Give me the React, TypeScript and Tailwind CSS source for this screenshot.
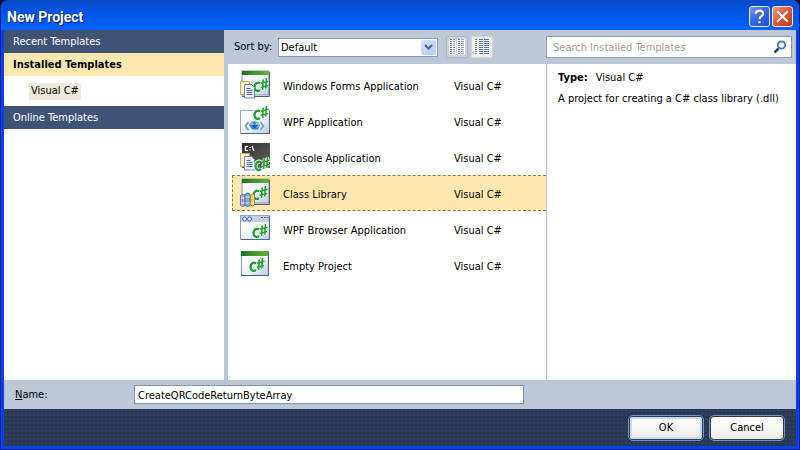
import { useState } from "react";
import type { ReactNode } from "react";

function Glyph({ x = 0, y = 0 }: { x?: number; y?: number }) {
  const c = "M7 6.500C4.500 4.500 1.500 6.500 1.500 10s3 5 5.500 3";
  const sharp = "M10.200 2.500 9.600 13M13.400 1l-.6 10.500M8 6.200l7.600-2M7.600 10.400l7.600-2";
  return (
    <g transform={`translate(${x} ${y})`} fill="none">
      <path d={c} stroke="#fff" strokeWidth="4" />
      <path d={sharp} stroke="#fff" strokeWidth="3" />
      <path d={c} stroke="#1fa12b" strokeWidth="2.400" />
      <path d={sharp} stroke="#1fa12b" strokeWidth="1.600" />
    </g>
  );
}

function GreenWindow() {
  return (
    <>
      <rect x="2" y="1" width="27" height="24" fill="url(#pane)" stroke="#8494a8" />
      <path d="M29.500 2v24.500H2" fill="none" stroke="#4d5f7d" />
      <rect x="2" y="1" width="27" height="4" fill="url(#green)" />
    </>
  );
}

function Pages() {
  return (
    <>
      <path d="M.5 11.500h9v13h-9z" fill="#fff3bd" stroke="#c4ae6b" />
      <path d="M4.500 14.500h7l3 3v10.500h-10z" fill="#f5f9ff" stroke="#7087ad" />
      <path d="M6.500 18.500h4M6.500 20.500h6M6.500 22.500h6M6.500 24.500h6" stroke="#3569b8" />
    </>
  );
}

type Kind = "forms" | "wpf" | "console" | "library" | "browser" | "empty";

function TemplateIcon({ kind }: { kind: Kind }) {
  return (
    <svg viewBox="0 0 32 30" className="h-[30px] w-8 shrink-0" aria-hidden="true">
      <defs>
        <linearGradient id="pane" x1="0" y1="0" x2="1" y2="1">
          <stop offset="0" stopColor="#fff" />
          <stop offset=".5" stopColor="#f3f7fb" />
          <stop offset="1" stopColor="#b9cce6" />
        </linearGradient>
        <linearGradient id="green">
          <stop offset="0" stopColor="#1f7427" />
          <stop offset="1" stopColor="#67b536" />
        </linearGradient>
        <linearGradient id="dark" x1="0" y1="0" x2="1" y2="1">
          <stop offset="0" stopColor="#2c2c2c" />
          <stop offset="1" stopColor="#686868" />
        </linearGradient>
      </defs>
      {kind === "forms" && (
        <>
          <GreenWindow />
          <Glyph x={13} y={7} />
          <Pages />
        </>
      )}
      {kind === "wpf" && (
        <>
          <rect x=".5" y="4.500" width="29" height="23" fill="url(#pane)" stroke="#a4acb8" />
          <path d="M29.500 5v22.500H1" fill="none" stroke="#526788" />
          <path d="m8.500 16-3 4 3 4M20.500 16l3 4-3 4" fill="none" stroke="#6e96b4" strokeWidth="1.500" />
          <path d="m9 19 3-3.500h5l3 3.500-2 4.500h-6z" fill="#3b86d4" />
          <path d="m9 19 3-3.500 2 3.500zM15 19l2-3.500 3 3.500-3 3z" fill="#86bdf0" />
          <path d="m12 19 3 4 3-4z" fill="#1b58ae" />
          <Glyph x={13} y={-1} />
        </>
      )}
      {kind === "console" && (
        <>
          <rect x="2" y="1" width="28" height="25" fill="url(#dark)" />
          <path d="M8 4.500H5.500v4H8M10 5v1M10 7.500v1M12 4l2 5" fill="none" stroke="#fff" strokeWidth="1.200" />
          <Pages />
          <Glyph x={14} y={14} />
        </>
      )}
      {kind === "library" && (
        <>
          <GreenWindow />
          <Glyph x={12} y={7} />
          <g strokeWidth=".8">
            <path d="M.5 17.500q2-3 4.500-.5v10.500q-2.500 2-4.500 0z" fill="#aaa4dc" stroke="#686596" />
            <path d="M5 16.500q2.500-3 5-.5v11.500q-2.500 2-5 0z" fill="#7faad4" stroke="#43658b" />
            <path d="M10.500 17.500q2-3 4-.5v10q-2 2-4 0z" fill="#efd15f" stroke="#9d7b2b" />
            <path d="M1 20h3.500M1 25h3.500M5.500 19H10M5.500 25H10M11 20h3M11 25h3" stroke="#fff" />
          </g>
        </>
      )}
      {kind === "browser" && (
        <>
          <rect x=".5" y="1.500" width="29" height="24" fill="url(#pane)" stroke="#97a2b3" />
          <path d="M29.500 2v23.500H1" fill="none" stroke="#526788" />
          <path d="M1 2h28v6H1z" fill="#c5cfdf" />
          <circle cx="4.500" cy="5" r="2" fill="#dce9ff" stroke="#4a68bb" />
          <circle cx="9.500" cy="5" r="2" fill="#dce9ff" stroke="#4a68bb" />
          <path d="M21 3.500h2M24 3.500h2M27 3.500h1.500" stroke="#596b87" />
          <Glyph x={12} y={9} />
        </>
      )}
      {kind === "empty" && (
        <>
          <rect x="1.500" y="1.500" width="27" height="24" fill="url(#pane)" stroke="#8494a8" />
          <path d="M28.500 2v23.500H1" fill="none" stroke="#4d5f7d" />
          <rect x="1" y="1" width="27" height="5" fill="url(#green)" />
          <Glyph x={9} y={7} />
        </>
      )}
    </svg>
  );
}

function ViewIcon({ detailed }: { detailed: boolean }) {
  const dots = ["#5e78b8", "#c45a5a", "#4c66a8", "#5a9a55", "#b27a3c", "#4c66a8", "#8a5aa0", "#5a9a55"];
  return (
    <svg viewBox="0 0 16 16" className="size-4" aria-hidden="true">
      <path d={detailed ? "M0 0h16v16H0z" : "M0 0h7v16H0zM8 0h8v16H8z"} fill="#fbfbfd" />
      {dots.map((dot, i) => (
        <g key={i} transform={`translate(0 ${i * 2})`}>
          <path d="M1 .5h2" stroke={dot} />
          {detailed ? (
            <path d="M5 .5h4M10 .5h5" stroke="#4f70cc" />
          ) : (
            <>
              <path d="M4 .5h2M12 .5h3" stroke="#8b9bd0" />
              <path d="M9 .5h2" stroke={dots[7 - i]} />
            </>
          )}
        </g>
      ))}
    </svg>
  );
}

const templates: { kind: Kind; name: string }[] = [
  { kind: "forms", name: "Windows Forms Application" },
  { kind: "wpf", name: "WPF Application" },
  { kind: "console", name: "Console Application" },
  { kind: "library", name: "Class Library" },
  { kind: "browser", name: "WPF Browser Application" },
  { kind: "empty", name: "Empty Project" },
];

function CaptionButton({ label, className, children }: { label: string; className: string; children: ReactNode }) {
  return (
    <button
      type="button"
      aria-label={label}
      className={`flex size-[21px] items-center justify-center rounded-[3px] border border-[#e4ebfb] bg-linear-to-br ${className}`}
    >
      {children}
    </button>
  );
}

function DialogButton({ primary, children }: { primary?: boolean; children: ReactNode }) {
  return (
    <button
      type="button"
      className={`h-[22px] w-[72px] rounded-[3px] bg-linear-to-b from-white to-[#ecebe5] outline outline-offset-1 outline-[#7896bd] ${
        primary ? "shadow-[inset_0_0_0_2px_#c6d9f7]" : ""
      }`}
    >
      {children}
    </button>
  );
}

export default function App() {
  const [selected, setSelected] = useState("Class Library");
  return (
    <div className="flex min-h-screen flex-col bg-[#10103c] font-['DejaVu_Sans_Condensed','Liberation_Sans',sans-serif] text-[11px] leading-4 text-black">
      <main className="flex flex-1 flex-col rounded-t-lg border-x border-b border-[#001c9c] bg-[#0544e4] px-[3px] pb-[3px]">
        <header className="-mx-[3px] flex h-[30px] shrink-0 items-center justify-between rounded-t-[7px] bg-linear-to-b from-[#0a4bc8] via-[#0054e3] via-40% to-[#0562fb] px-[6px]">
          <h1 className="pt-1 font-['Roboto','Open_Sans',sans-serif] text-sm font-bold text-white [text-shadow:1px_1px_1px_#0a1883]">
            New Project
          </h1>
          <div className="flex gap-[2px] pt-[3px]">
            <CaptionButton label="Help" className="from-[#7797f3] via-[#3564e5] to-[#1d4bd8]">
              <svg viewBox="0 0 14 14" className="size-[15px]" fill="none" stroke="#fff" strokeWidth="2" aria-hidden="true">
                <path d="M3.500 4.500C3.500.5 10.500.5 10.500 4.200 10.500 6.800 7 6.500 7 9.500M7 11.200v2" />
              </svg>
            </CaptionButton>
            <CaptionButton label="Close" className="from-[#f0967c] via-[#e05430] to-[#c43a12]">
              <svg viewBox="0 0 14 14" className="size-[15px]" stroke="#fff" strokeWidth="2" aria-hidden="true">
                <path d="m2 2 10 10M12 2 2 12" />
              </svg>
            </CaptionButton>
          </div>
        </header>

        <div className="flex min-h-0 flex-1 bg-[#bcc7d8]">
          <nav aria-label="Template categories" className="flex w-[220px] shrink-0 flex-col bg-white">
            <button type="button" className="h-[23px] bg-[#3f5377] px-[9px] text-left text-white">
              Recent Templates
            </button>
            <button type="button" className="h-[23px] bg-[#ffe8b0] px-[9px] text-left font-bold">
              Installed Templates
            </button>
            <div className="flex h-[30px] items-center pl-[25px]">
              <button type="button" className="h-[17px] bg-[#ece9d8] px-[2px]">
                Visual C#
              </button>
            </div>
            <button type="button" className="h-[23px] bg-[#3f5377] px-[9px] text-left text-white">
              Online Templates
            </button>
          </nav>

          <div className="ml-1 flex min-w-0 flex-1 flex-col">
            <div className="flex h-[34px] items-center justify-between pr-1 pl-[6px]">
              <div className="flex items-center">
                <label htmlFor="sort" className="w-11">
                  Sort by:
                </label>
                <div className="relative">
                  <select
                    id="sort"
                    className="block h-[19px] w-40 appearance-none rounded-none border border-[#7f9db9] bg-white px-[2px] pt-px leading-4"
                  >
                    <option>Default</option>
                    <option>Name Ascending</option>
                    <option>Name Descending</option>
                  </select>
                  <span className="pointer-events-none absolute top-[2px] right-[2px] flex size-[15px] items-center justify-center rounded-xs bg-linear-to-br from-[#d5e1fd] to-[#b2c8f7]">
                    <svg viewBox="0 0 9 6" className="h-[6px] w-[9px]" fill="none" stroke="#4d6185" strokeWidth="2" aria-hidden="true">
                      <path d="m1 1 3.500 3.500L8 1" />
                    </svg>
                  </span>
                </div>
                <button
                  type="button"
                  aria-label="Small icons"
                  className="ml-2 flex size-[22px] items-center justify-center rounded-xs border border-[#aeb6c2] bg-[#ccd2dc]"
                >
                  <ViewIcon detailed={false} />
                </button>
                <button
                  type="button"
                  aria-label="Medium icons"
                  aria-pressed="true"
                  className="ml-[3px] flex size-[22px] items-center justify-center rounded-xs border border-[#d8d8d2] bg-[#efeee8]"
                >
                  <ViewIcon detailed />
                </button>
              </div>
              <div className="flex h-[22px] w-[246px] items-center border border-[#8a9bb4] bg-white pr-1 pl-[6px]">
                <input
                  type="search"
                  aria-label="Search Installed Templates"
                  placeholder="Search Installed Templates"
                  className="min-w-0 flex-1 pt-px outline-none placeholder:text-[#a5a299]"
                />
                <svg viewBox="0 0 14 14" className="size-[14px]" fill="none" aria-hidden="true">
                  <path d="m1.500 12.500 4-4" stroke="#24476f" strokeWidth="2.500" />
                  <circle cx="8.500" cy="5" r="3.700" fill="#eef7ff" stroke="#3f79b7" strokeWidth="1.800" />
                </svg>
              </div>
            </div>

            <div className="flex flex-1 bg-white">
              <ul aria-label="Templates" className="min-w-0 flex-1 pt-[3px] pl-1">
                {templates.map((t) => (
                  <li key={t.name}>
                    <button
                      type="button"
                      aria-pressed={selected === t.name}
                      onClick={() => setSelected(t.name)}
                      className={`flex h-9 w-full items-center border border-r-0 pl-[7px] text-left ${
                        selected === t.name ? "border-dashed border-[#8f7a4c] bg-[#ffe8b0]" : "border-transparent"
                      }`}
                    >
                      <TemplateIcon kind={t.kind} />
                      <span className="ml-[11px] w-[171px] pt-1">{t.name}</span>
                      <span className="pt-1">Visual C#</span>
                    </button>
                  </li>
                ))}
              </ul>
              <section className="w-[250px] shrink-0 border-l border-[#bcc0ca] pt-[6px] pl-[11px]">
                <p>
                  <strong className="mr-2">Type:</strong>Visual C#
                </p>
                <p className="mt-[5px]">A project for creating a C# class library (.dll)</p>
              </section>
            </div>
          </div>
        </div>

        <div className="flex h-[29px] shrink-0 items-center bg-[#bcc7d8] pl-[11px]">
          <label htmlFor="name" className="w-[119px] pt-px">
            <span className="underline">N</span>ame:
          </label>
          <input
            id="name"
            defaultValue="CreateQRCodeReturnByteArray"
            className="h-[19px] w-[390px] border border-[#7f93b5] bg-white px-[3px] pt-px outline-none"
          />
        </div>

        <footer className="flex h-[37px] shrink-0 items-center justify-end gap-[9px] bg-[#293955] bg-[radial-gradient(#30425f_1px,transparent_1px)] bg-size-[4px_4px] pr-[13px]">
          <DialogButton primary>OK</DialogButton>
          <DialogButton>Cancel</DialogButton>
        </footer>
      </main>
    </div>
  );
}
